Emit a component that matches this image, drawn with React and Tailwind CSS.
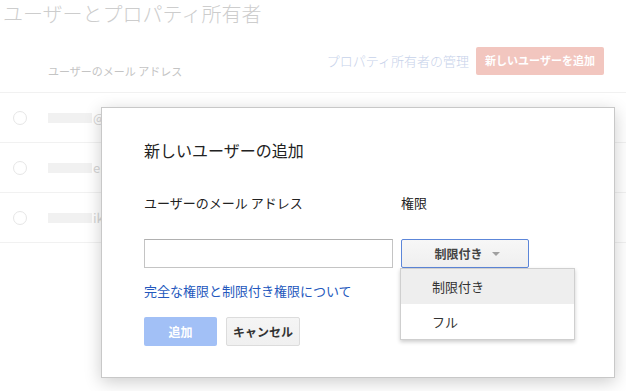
import React from "react";

const jp = { fontFamily: '"Noto Sans CJK JP", "Noto Sans", sans-serif' };

function BgRow({ frag }) {
  return (
    <div className="flex items-center h-[50px] border-b border-[#f1f1f1]">
      <div className="w-[14px] h-[14px] rounded-full border border-[#e6e6e6] ml-[13px]" />
      <div className="flex items-center ml-[21px]">
        <div className="w-[44px] h-[10px] bg-[#f1f1f1]" />
        <span className="text-[13px] text-[#d6d6d6] ml-[1px]">{frag}</span>
      </div>
    </div>
  );
}

export default function App() {
  return (
    <div className="relative w-[626px] h-[391px] overflow-hidden bg-white" style={jp}>
      {/* background page (faded) */}
      <div className="flex flex-col">
        <div className="pl-[3px] pt-[1px] text-[20px] leading-[26px] font-light text-[#cdcdcd]">
          ユーザーとプロパティ所有者
        </div>
        <div className="flex items-center h-[66px] border-b border-[#f1f1f1]">
          <div className="ml-[48px] mt-[24px] text-[11px] text-[#c4c4c4]">ユーザーのメール アドレス</div>
          <div className="flex items-center ml-auto mr-[22px] mt-[2px]">
            <span className="text-[13px] text-[#c7d2ea] font-light">プロパティ所有者の管理</span>
            <div className="ml-[7px] w-[128px] h-[28px] rounded-[2px] bg-[#f2c6bf] text-white text-[11px] font-bold flex items-center justify-center">
              新しいユーザーを追加
            </div>
          </div>
        </div>
        <BgRow frag="@" />
        <BgRow frag="en" />
        <BgRow frag="ik" />
      </div>

      {/* dialog */}
      <div className="absolute left-[101px] top-[107px] w-[514px] h-[271px] bg-white border border-[#c8c8c8] shadow-[0_4px_16px_rgba(0,0,0,0.2)]">
        <div className="pl-[42px] pt-[31px] flex flex-col">
          <div className="text-[16px] leading-[22px] text-[#222]">新しいユーザーの追加</div>
          <div className="flex mt-[33px] text-[13px] leading-[18px] text-[#222]">
            <div className="w-[257px]">ユーザーのメール アドレス</div>
            <div>権限</div>
          </div>
          <div className="flex mt-[27px] relative">
            <div className="w-[249px] h-[29px] border border-[#c4c4c4] border-t-[#b0b0b0]" />
            <div className="relative ml-[8px]">
              <div className="w-[128px] h-[29px] border border-[#5c86d9] rounded-[2px] bg-gradient-to-b from-[#f7f7f7] to-[#efefef] flex items-center justify-center text-[12px] font-bold text-[#444]">
                <span className="ml-[4px]">制限付き</span>
                <svg width="8" height="5" viewBox="0 0 8 5" className="ml-[9px] mt-[1px]">
                  <path d="M0 0 L8 0 L4 4 Z" fill="#a0a0a0" />
                </svg>
              </div>
              <div className="absolute left-[-1px] top-[29px] w-[175px] bg-white border border-[#cfcfcf] shadow-[0_2px_4px_rgba(0,0,0,0.2)] z-10 text-[13px] text-[#333]">
                <div className="h-[35px] bg-[#eeeeee] flex items-center pl-[31px]">制限付き</div>
                <div className="h-[35px] flex items-center pl-[31px]">フル</div>
              </div>
            </div>
          </div>
          <div className="mt-[14px] text-[13px] leading-[18px] text-[#2458bd]">完全な権限と制限付き権限について</div>
          <div className="flex mt-[17px]">
            <div className="w-[73px] h-[29px] rounded-[2px] bg-[#a2c0f6] text-white text-[12px] font-bold flex items-center justify-center">
              追加
            </div>
            <div className="ml-[9px] w-[74px] h-[29px] rounded-[2px] border border-[#dcdcdc] bg-gradient-to-b from-[#f5f5f5] to-[#f0f0f0] text-[#333] text-[12px] font-bold flex items-center justify-center">
              キャンセル
            </div>
          </div>
        </div>
      </div>
    </div>
  );
}
